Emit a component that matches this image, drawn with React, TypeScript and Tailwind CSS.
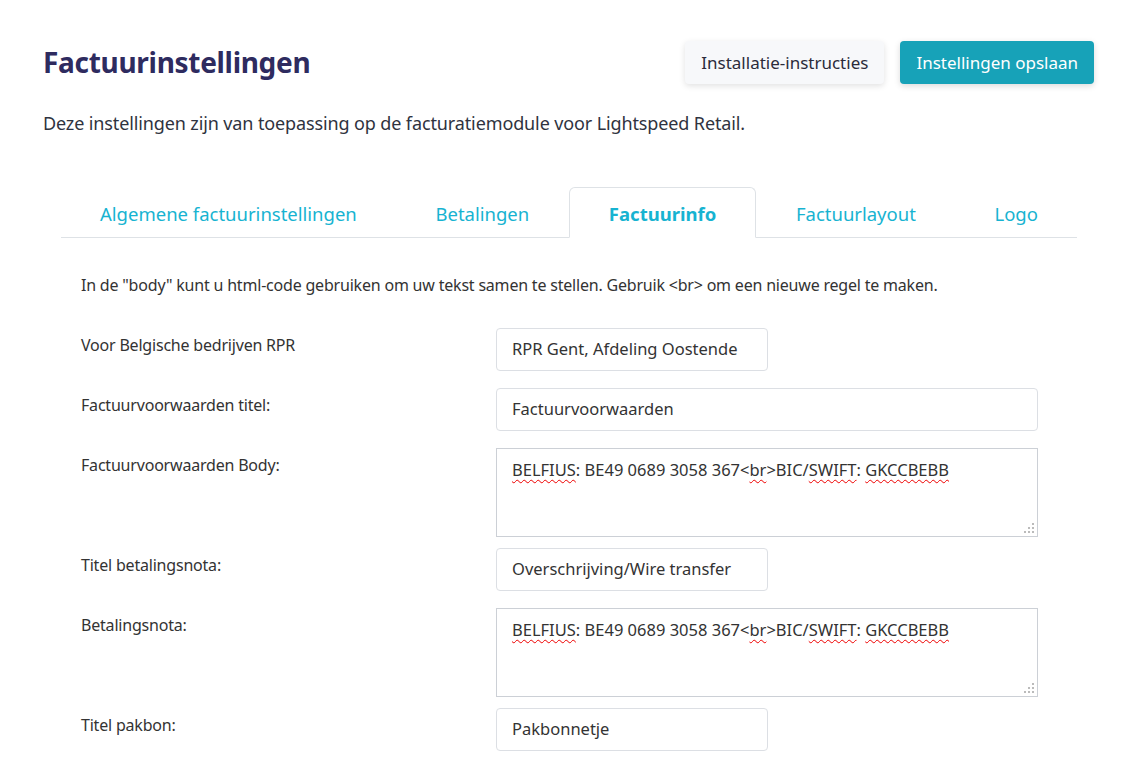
const tabs = [
  "Algemene factuurinstellingen",
  "Betalingen",
  "Factuurinfo",
  "Factuurlayout",
  "Logo",
];

const Squiggle = (props: { children: string }) => {
  return (
    <span className="underline decoration-wavy decoration-[#e00] decoration-1 underline-offset-[3px]">
      {props.children}
    </span>
  );
};

const Label = (props: { text: string }) => {
  return (
    <div className="w-[415px] shrink-0 pt-[6px] text-[16px] leading-[22px] tracking-[-0.2px] text-[#333]">
      {props.text}
    </div>
  );
};

const Field = (props: { label: string; value: string; wide?: boolean }) => {
  return (
    <div className="flex mb-[17px]">
      <Label text={props.label} />
      <div
        className={
          "h-[43px] flex items-center px-[15px] border border-[#dcdfe4] rounded-[4px] text-[16.5px] text-[#333] " +
          (props.wide ? "w-[542px]" : "w-[272px]")
        }
      >
        {props.value}
      </div>
    </div>
  );
};

const Area = (props: { label: string }) => {
  return (
    <div className="flex mb-[11px]">
      <Label text={props.label} />
      <div className="relative w-[542px] h-[89px] border border-[#ccd0d6] px-[15px] pt-[9px] text-[16.5px] text-[#333]">
        <Squiggle>BELFIUS</Squiggle>: BE49 0689 3058 367&lt;<Squiggle>br</Squiggle>&gt;BIC/
        <Squiggle>SWIFT</Squiggle>: <Squiggle>GKCCBEBB</Squiggle>
        <svg className="absolute right-[3px] bottom-[3px]" width="10" height="10" viewBox="0 0 10 10">
          <rect x="8" y="0" width="2" height="2" fill="#bbb" />
          <rect x="4" y="4" width="2" height="2" fill="#bbb" />
          <rect x="8" y="4" width="2" height="2" fill="#bbb" />
          <rect x="0" y="8" width="2" height="2" fill="#bbb" />
          <rect x="4" y="8" width="2" height="2" fill="#bbb" />
          <rect x="8" y="8" width="2" height="2" fill="#bbb" />
        </svg>
      </div>
    </div>
  );
};

function App() {
  return (
    <div
      className="min-h-screen bg-white pl-[43px] pr-[30px] pt-[41px] overflow-hidden"
      style={{ fontFamily: '"Noto Sans", "Open Sans", sans-serif' }}
    >
      <div className="flex items-center justify-between">
        <h1 className="text-[28px] font-bold text-[#2e2b5f] tracking-[-0.3px] -mt-[2px]">
          Factuurinstellingen
        </h1>
        <div className="flex gap-4">
          <button className="h-[43px] px-4 rounded-[4px] bg-[#f7f8fa] text-[17px] text-[#2b2b3a] shadow-[0_2px_6px_rgba(0,0,0,0.12)]">
            Installatie-instructies
          </button>
          <button className="h-[43px] px-4 rounded-[4px] bg-[#17a2b8] text-[17px] text-white shadow-[0_2px_6px_rgba(0,0,0,0.15)]">
            Instellingen opslaan
          </button>
        </div>
      </div>

      <p className="mt-[26px] text-[18px] tracking-[-0.12px] text-[#2f3340]">
        Deze instellingen zijn van toepassing op de facturatiemodule voor Lightspeed Retail.
      </p>

      <div className="ml-[18px] mr-[17px] mt-[50px]">
        <div className="flex justify-between border-b border-[#dee2e6]">
          {tabs.map((t) =>
            t === "Factuurinfo" ? (
              <div
                key={t}
                className="h-[51px] -mb-px flex items-center pt-[3px] px-[39px] border border-[#dee2e6] border-b-white rounded-t-[6px] bg-white text-[18.5px] font-bold text-[#17b3d1]"
              >
                {t}
              </div>
            ) : (
              <div
                key={t}
                className="h-[50px] flex items-center pt-[3px] px-[39px] text-[18.5px] text-[#17b3d1]"
              >
                {t}
              </div>
            )
          )}
        </div>

        <div className="pl-5 pt-[36px]">
          <p className="text-[16px] leading-[22px] tracking-[-0.2px] text-[#333] mb-[32px]">
            In de "body" kunt u html-code gebruiken om uw tekst samen te stellen. Gebruik &lt;br&gt; om een nieuwe regel te maken.
          </p>
          <Field label="Voor Belgische bedrijven RPR" value="RPR Gent, Afdeling Oostende" />
          <Field label="Factuurvoorwaarden titel:" value="Factuurvoorwaarden" wide />
          <Area label="Factuurvoorwaarden Body:" />
          <Field label="Titel betalingsnota:" value="Overschrijving/Wire transfer" />
          <Area label="Betalingsnota:" />
          <Field label="Titel pakbon:" value="Pakbonnetje" />
        </div>
      </div>
    </div>
  );
}

export default App;
